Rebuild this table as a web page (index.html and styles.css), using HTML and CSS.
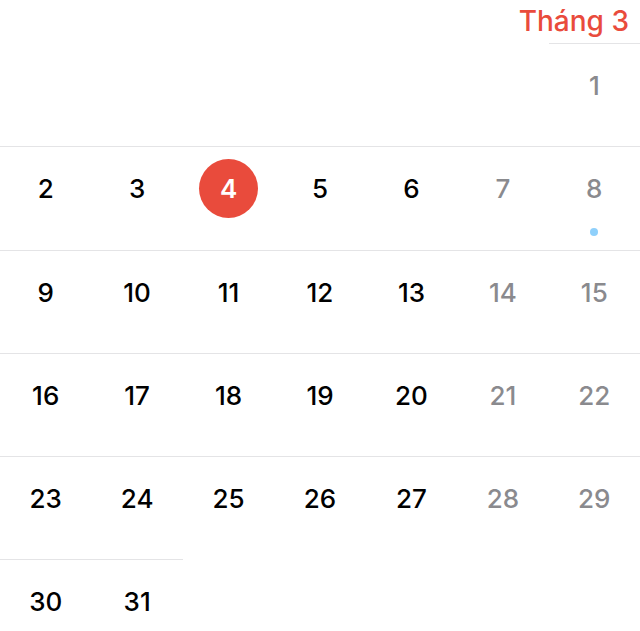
FILE: index.html
```html
<!DOCTYPE html>
<html lang="vi">
<head>
<meta charset="utf-8">
<title>Tháng 3</title>
<link rel="stylesheet" href="styles.css">
</head>
<body>
<div class="month">
  <div class="month-title">Tháng 3</div>
  <div class="grid">
    <div class="cell empty"></div><div class="cell empty"></div><div class="cell empty"></div><div class="cell empty"></div><div class="cell empty"></div><div class="cell empty"></div>
    <div class="cell weekend"><span class="num">1</span></div>

    <div class="cell"><span class="num">2</span></div>
    <div class="cell"><span class="num">3</span></div>
    <div class="cell"><span class="num today">4</span></div>
    <div class="cell"><span class="num">5</span></div>
    <div class="cell"><span class="num">6</span></div>
    <div class="cell weekend"><span class="num">7</span></div>
    <div class="cell weekend"><span class="num">8</span><span class="dot"></span></div>

    <div class="cell"><span class="num">9</span></div>
    <div class="cell"><span class="num">10</span></div>
    <div class="cell"><span class="num">11</span></div>
    <div class="cell"><span class="num">12</span></div>
    <div class="cell"><span class="num">13</span></div>
    <div class="cell weekend"><span class="num">14</span></div>
    <div class="cell weekend"><span class="num">15</span></div>

    <div class="cell"><span class="num">16</span></div>
    <div class="cell"><span class="num">17</span></div>
    <div class="cell"><span class="num">18</span></div>
    <div class="cell"><span class="num">19</span></div>
    <div class="cell"><span class="num">20</span></div>
    <div class="cell weekend"><span class="num">21</span></div>
    <div class="cell weekend"><span class="num">22</span></div>

    <div class="cell"><span class="num">23</span></div>
    <div class="cell"><span class="num">24</span></div>
    <div class="cell"><span class="num">25</span></div>
    <div class="cell"><span class="num">26</span></div>
    <div class="cell"><span class="num">27</span></div>
    <div class="cell weekend"><span class="num">28</span></div>
    <div class="cell weekend"><span class="num">29</span></div>

    <div class="cell last"><span class="num">30</span></div>
    <div class="cell last"><span class="num">31</span></div>
  </div>
</div>
</body>
</html>
```

FILE: styles.css
```css
html, body {
  margin: 0;
  padding: 0;
  background: #ffffff;
}

body {
  font-family: Inter, "Noto Sans", "Liberation Sans", sans-serif;
  width: 640px;
  height: 631px;
  overflow: hidden;
}

.month {
  display: flex;
  flex-direction: column;
  height: 631px;
  overflow: hidden;
}

.month-title {
  height: 43px;
  flex: none;
  box-sizing: border-box;
  padding: 4px 11px 0 0;
  text-align: right;
  color: #e94b3c;
  font-size: 28px;
  font-weight: 500;
  line-height: 34px;
}

.grid {
  display: grid;
  grid-template-columns: repeat(7, 1fr);
  grid-template-rows: repeat(5, 103.3px) 72px;
}

.cell {
  box-sizing: border-box;
  border-top: 1px solid #e4e4e6;
  display: flex;
  flex-direction: column;
  align-items: center;
  padding-top: 12px;
}

.cell.empty {
  border-top: none;
}

.num {
  flex: none;
  width: 59px;
  height: 59px;
  border-radius: 50%;
  display: flex;
  align-items: center;
  justify-content: center;
  font-size: 26px;
  font-weight: 500;
  color: #000000;
}

.weekend .num {
  color: #8a8a8e;
}

.num.today {
  background: #e94b3c;
  color: #ffffff;
  font-weight: 600;
}

.dot {
  flex: none;
  width: 8px;
  height: 8px;
  border-radius: 50%;
  background: #8fd0fb;
  margin-top: 10px;
}
```
